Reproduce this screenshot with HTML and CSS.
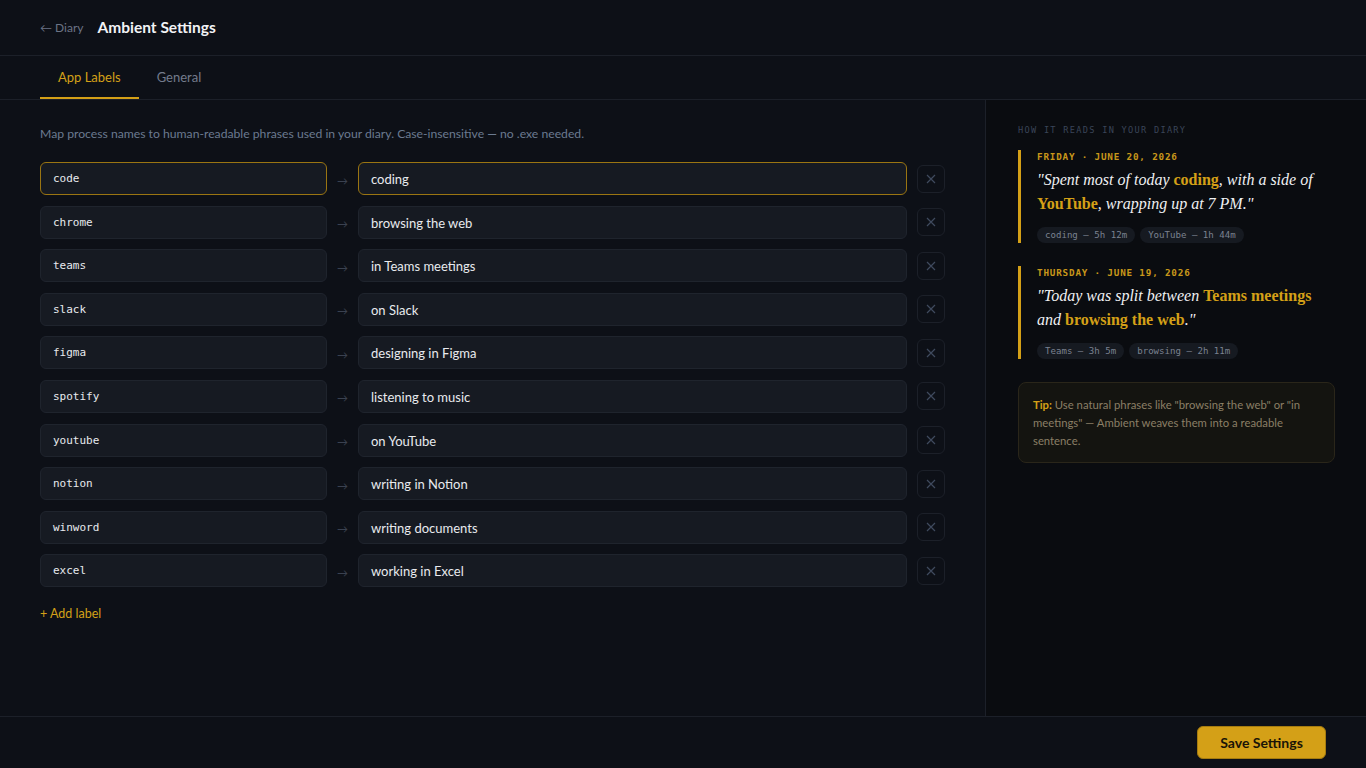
FILE: index.html
```html
<!DOCTYPE html>
<html>
<head>
<meta charset="utf-8">
<link rel="stylesheet" href="styles.css">
</head>
<body>
<div class="app">
  <header class="topbar">
    <a class="back">← Diary</a>
    <h1 class="title">Ambient Settings</h1>
  </header>
  <nav class="tabs">
    <div class="tab active">App Labels</div>
    <div class="tab">General</div>
  </nav>
  <div class="body">
    <main class="main">
      <p class="desc">Map process names to human-readable phrases used in your diary. Case-insensitive — no .exe needed.</p>
      <div class="rows">
        <div class="row focus"><div class="field proc">code</div><span class="arrow">→</span><div class="field phrase">coding</div><button class="del"><svg viewBox="0 0 12 12"><path d="M2 2L10 10M10 2L2 10"/></svg></button></div>
        <div class="row"><div class="field proc">chrome</div><span class="arrow">→</span><div class="field phrase">browsing the web</div><button class="del"><svg viewBox="0 0 12 12"><path d="M2 2L10 10M10 2L2 10"/></svg></button></div>
        <div class="row"><div class="field proc">teams</div><span class="arrow">→</span><div class="field phrase">in Teams meetings</div><button class="del"><svg viewBox="0 0 12 12"><path d="M2 2L10 10M10 2L2 10"/></svg></button></div>
        <div class="row"><div class="field proc">slack</div><span class="arrow">→</span><div class="field phrase">on Slack</div><button class="del"><svg viewBox="0 0 12 12"><path d="M2 2L10 10M10 2L2 10"/></svg></button></div>
        <div class="row"><div class="field proc">figma</div><span class="arrow">→</span><div class="field phrase">designing in Figma</div><button class="del"><svg viewBox="0 0 12 12"><path d="M2 2L10 10M10 2L2 10"/></svg></button></div>
        <div class="row"><div class="field proc">spotify</div><span class="arrow">→</span><div class="field phrase">listening to music</div><button class="del"><svg viewBox="0 0 12 12"><path d="M2 2L10 10M10 2L2 10"/></svg></button></div>
        <div class="row"><div class="field proc">youtube</div><span class="arrow">→</span><div class="field phrase">on YouTube</div><button class="del"><svg viewBox="0 0 12 12"><path d="M2 2L10 10M10 2L2 10"/></svg></button></div>
        <div class="row"><div class="field proc">notion</div><span class="arrow">→</span><div class="field phrase">writing in Notion</div><button class="del"><svg viewBox="0 0 12 12"><path d="M2 2L10 10M10 2L2 10"/></svg></button></div>
        <div class="row"><div class="field proc">winword</div><span class="arrow">→</span><div class="field phrase">writing documents</div><button class="del"><svg viewBox="0 0 12 12"><path d="M2 2L10 10M10 2L2 10"/></svg></button></div>
        <div class="row"><div class="field proc">excel</div><span class="arrow">→</span><div class="field phrase">working in Excel</div><button class="del"><svg viewBox="0 0 12 12"><path d="M2 2L10 10M10 2L2 10"/></svg></button></div>
      </div>
      <a class="add">+ Add label</a>
    </main>
    <aside class="side">
      <div class="side-label">HOW IT READS IN YOUR DIARY</div>
      <div class="entry">
        <div class="date">FRIDAY · JUNE 20, 2026</div>
        <p class="quote">"Spent most of today <b>coding</b>, with a side of <b>YouTube</b>, wrapping up at 7 PM."</p>
        <div class="pills"><span class="pill">coding — 5h 12m</span><span class="pill">YouTube — 1h 44m</span></div>
      </div>
      <div class="entry">
        <div class="date">THURSDAY · JUNE 19, 2026</div>
        <p class="quote">"Today was split between <b>Teams meetings</b> and <b>browsing the web</b>."</p>
        <div class="pills"><span class="pill">Teams — 3h 5m</span><span class="pill">browsing — 2h 11m</span></div>
      </div>
      <div class="tip"><b>Tip:</b> Use natural phrases like "browsing the web" or "in meetings" — Ambient weaves them into a readable sentence.</div>
    </aside>
  </div>
  <footer class="footer">
    <button class="save">Save Settings</button>
  </footer>
</div>
</body>
</html>
```

FILE: styles.css
```css
* { box-sizing: border-box; }
html, body { margin: 0; padding: 0; }
body {
  background: #0d1017;
  color: #e6e8ec;
  font-family: Lato, "Open Sans", sans-serif;
  width: 1366px;
  height: 768px;
  overflow: hidden;
}
.app { display: flex; flex-direction: column; height: 768px; }
.topbar {
  height: 56px;
  display: flex;
  align-items: center;
  padding: 0 40px 1px 40px;
  border-bottom: 1px solid #1c2029;
  gap: 14px;
}
.back { font-size: 12px; color: #6b7385; }
.title { margin: 0; font-size: 15.5px; font-weight: 700; color: #f2f3f5; }
.tabs {
  height: 44px;
  display: flex;
  padding: 0 40px;
  border-bottom: 1px solid #1c2029;
}
.tab {
  padding: 1px 18px 0 18px;
  display: flex;
  align-items: center;
  font-size: 13px;
  color: #737b8c;
  border-bottom: 2px solid transparent;
}
.tab.active { color: #d4a017; border-bottom-color: #d4a017; }
.body { flex: 1; display: flex; min-height: 0; }
.main { width: 985px; flex-shrink: 0; padding: 25px 40px 0 40px; }
.desc { margin: 0 0 19px 0; font-size: 12.2px; color: #6b7a90; line-height: 18px; }
.rows { display: flex; flex-direction: column; gap: 10.6px; }
.row { display: flex; align-items: center; height: 33px; }
.field {
  flex-shrink: 0;
  height: 33px;
  background: #161a22;
  border: 1px solid #1f242d;
  border-radius: 6px;
  display: flex;
  align-items: center;
  padding: 0 12px;
  color: #e8eaee;
}
.proc { width: 287px; font-family: "DejaVu Sans Mono", monospace; font-size: 11px; }
.phrase { width: 549px; font-size: 13px; padding-top: 1px; }
.row.focus .field { border-color: #9a7512; }
.arrow { width: 31px; flex-shrink: 0; text-align: center; color: #3a4150; font-size: 11px; padding-top: 3px; }
.del {
  flex-shrink: 0;
  margin-left: 10px;
  width: 28px;
  height: 28px;
  background: transparent;
  border: 1px solid #1c2029;
  border-radius: 6px;
  display: flex;
  align-items: center;
  justify-content: center;
  padding: 0;
}
.del svg { width: 12px; height: 12px; stroke: #3f4a5e; stroke-width: 1.2; fill: none; }
.add { display: block; margin-top: 19px; font-size: 12.5px; color: #d4a017; }
.side { flex: 1; background: #0a0c10; border-left: 1px solid #1c2029; padding: 25px 31px 0 32px; }
.side-label {
  font-family: "DejaVu Sans Mono", monospace;
  font-size: 8.6px;
  letter-spacing: 1.3px;
  color: #3a4558;
  margin-bottom: 15px;
}
.entry { border-left: 3px solid #d4a017; padding: 1px 0 0 16px; margin-bottom: 23px; }
.date {
  font-family: "DejaVu Sans Mono", monospace;
  font-size: 9.3px;
  font-weight: bold;
  letter-spacing: 0.8px;
  color: #c8971a;
  line-height: 12px;
}
.quote {
  margin: 5px 0 11px 0;
  font-family: "Liberation Serif", serif;
  font-style: italic;
  font-size: 16px;
  line-height: 24px;
  color: #f0f1f3;
}
.quote b { font-style: normal; font-weight: bold; color: #d4a017; }
.pills { display: flex; gap: 5px; }
.pill {
  font-family: "DejaVu Sans Mono", monospace;
  font-size: 9.1px;
  color: #7b8290;
  background: #161a21;
  border-radius: 8px;
  padding: 2px 8px;
  line-height: 12px;
}
.tip {
  border: 1px solid #2a261a;
  background: #141410;
  border-radius: 8px;
  padding: 13px 14px 12px 14px;
  font-size: 11.3px;
  line-height: 18px;
  color: #8b7f66;
}
.tip b { color: #d4a017; }
.footer {
  height: 52px;
  border-top: 1px solid #1c2029;
  display: flex;
  align-items: center;
  justify-content: flex-end;
  padding: 0 40px;
}
.save {
  width: 129px;
  height: 33px;
  background: #d4a017;
  border: 1px solid #a67c10;
  border-radius: 6px;
  font-family: Lato, sans-serif;
  font-weight: 700;
  font-size: 14px;
  color: #1a1407;
}
```
